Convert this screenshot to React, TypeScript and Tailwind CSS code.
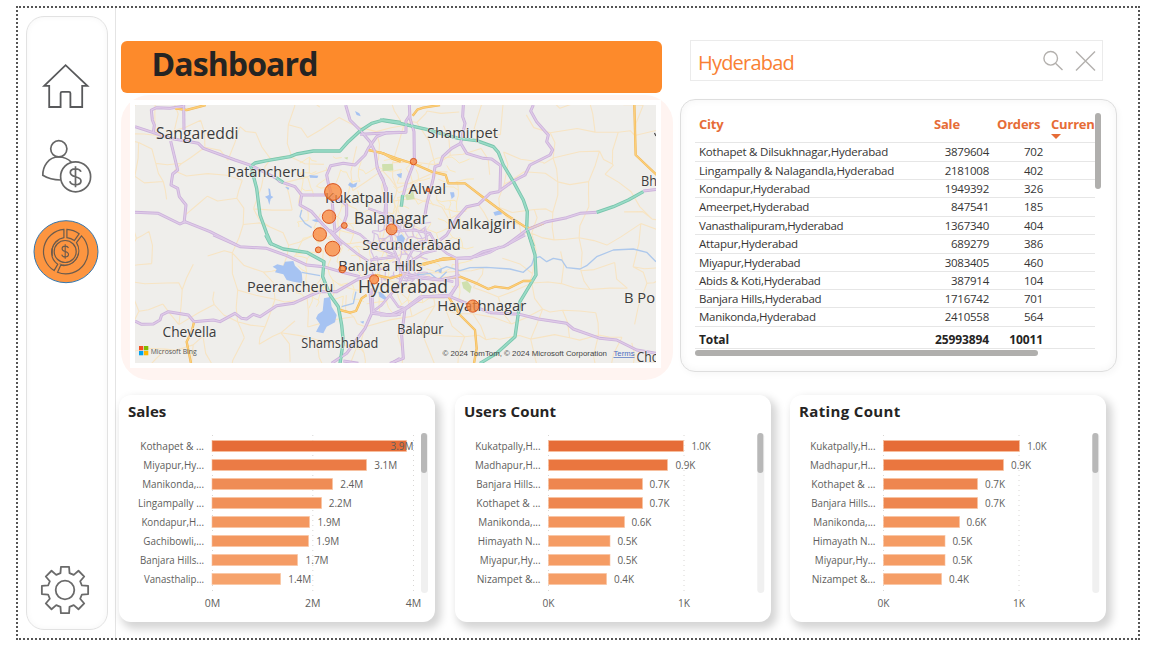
import React from "react";

type Kind = "purple" | "teal" | "orange";
type Tile = "nw" | "ne" | "sw" | "se" | "c";

const ORIGIN: Record<Tile, [number, number]> = {
  nw: [120, 95],
  ne: [380, 95],
  sw: [120, 235],
  se: [380, 235],
  c: [290, 165],
};

const place = (t: Tile) => `translate(${ORIGIN[t][0]} ${ORIGIN[t][1]}) scale(0.33333)`;

const ROADS: [Tile, Kind, string][] = [
  ["nw", "orange", "M165,40 L200,45 L257,30"],
  ["nw", "orange", "M745,165 L790,175 L815,190 L842,200"],
  ["ne", "orange", "M98,62 L112,44 L130,38 L180,30"],
  ["ne", "orange", "M0,172 L50,190 L103,207 L155,230 L197,240 L205,265 L255,265 L300,300 L340,330 L380,360 L435,395 L450,400 L490,385"],
  ["ne", "orange", "M763,30 L767,180 L830,240"],
  ["sw", "orange", "M222,262 L215,290 L200,320 L213,385"],
  ["sw", "orange", "M660,225 L690,233 L708,228 L725,190 L740,180"],
  ["se", "orange", "M130,90 L190,70 L230,70"],
  ["se", "orange", "M200,130 L240,125 L290,145 L325,162 L345,155 L385,160 L430,138 L460,138"],
  ["se", "orange", "M205,185 L240,240 L285,285 L290,340 L282,385"],
  ["c", "orange", "M255,330 L300,340 L350,325"],
  ["c", "orange", "M385,300 L450,285 L500,280"],
  ["nw", "purple", "M45,95 L100,113 L103,90 L97,75 L94,45 L110,38 L150,40 L190,34"],
  ["nw", "purple", "M191,30 L192,105"],
  ["nw", "purple", "M100,113 L150,130 L235,145 L250,160 L345,195 L395,212 L470,250 L480,260 L525,275 L545,300 L540,330 L575,350 L610,390 L640,420 L665,450"],
  ["nw", "purple", "M152,138 L173,225 L158,237 L153,270 L173,280 L178,305 L198,330 L192,385"],
  ["nw", "purple", "M45,352 L115,355 L180,387 L195,380 L270,410 L350,450"],
  ["nw", "purple", "M677,30 L690,75 L720,105 L750,140 L765,170 L772,220 L790,255 L800,300 L795,350 L805,400"],
  ["nw", "purple", "M840,112 L800,113 L770,125 L745,160 L735,180 L705,210 L670,205 L632,212 L620,240 L625,265 L635,300 L640,360 L645,410"],
  ["nw", "purple", "M545,300 L640,300 L680,330 L680,360 L670,390 L640,415"],
  ["ne", "purple", "M88,30 L90,70 L102,110 L103,200 L80,260 L70,300"],
  ["ne", "purple", "M-60,118 L0,115 L78,112 L78,78 L90,60"],
  ["ne", "purple", "M250,30 L248,65 L255,85 L242,145 L260,175 L310,190 L335,192 L362,212 L360,285"],
  ["ne", "purple", "M242,145 L215,160 L188,185 L180,210 L165,215 L160,250 L140,330 L135,360"],
  ["ne", "purple", "M460,30 L452,48 L470,80 L505,120 L500,140 L518,165 L510,180 L450,210 L435,240 L400,258 L355,290 L330,295 L295,328 L260,335 L230,370 L200,420 L180,435"],
  ["ne", "purple", "M380,450 L440,405 L500,380 L560,368 L600,355 L650,352"],
  ["ne", "purple", "M790,288 L830,283"],
  ["sw", "purple", "M280,0 L360,35 L440,40 L500,62 L560,90 L610,95 L680,115 L720,125"],
  ["sw", "purple", "M45,258 L65,268 L100,267 L120,255 L125,240 L145,230 L205,240 L222,260 L280,255 L300,260 L345,235 L365,250 L380,252 L400,238 L420,245 L470,212 L520,205 L570,182 L600,170 L650,170 L710,135 L760,120"],
  ["sw", "purple", "M635,385 L680,355 L720,300 L735,280 L755,235 L750,170"],
  ["sw", "purple", "M755,235 L800,240 L842,238"],
  ["sw", "purple", "M670,378 L715,385"],
  ["sw", "purple", "M815,385 L840,370"],
  ["se", "purple", "M435,0 L370,35 L310,50 L270,70 L230,70 L232,150 L210,185"],
  ["se", "purple", "M330,233 L420,238 L475,252 L560,265 L580,282 L660,310 L710,315 L770,345 L828,355"],
  ["se", "purple", "M0,240 L50,240 L80,220 L130,185 L210,185 L260,205 L330,233"],
  ["se", "purple", "M75,222 L65,300 L70,370 L30,385"],
  ["se", "purple", "M70,115 L130,130 L180,135 L240,122"],
  ["c", "purple", "M260,0 L270,30 L290,70 L290,150 L300,200 L310,250"],
  ["c", "purple", "M120,195 L150,225 L200,265 L235,288"],
  ["c", "purple", "M165,190 L210,208 L235,230 L270,250 L310,268"],
  ["c", "purple", "M235,130 L290,150 L330,190"],
  ["c", "purple", "M305,200 L370,195 L420,205 L440,240 L470,265 L500,280"],
  ["c", "purple", "M500,280 L500,360 L480,390"],
  ["c", "purple", "M405,190 L410,225 L370,250 L350,290"],
  ["c", "purple", "M630,245 L600,262 L560,275 L500,280"],
  ["c", "purple", "M240,285 L320,275 L340,330 L320,370 L300,390 L275,420 L248,440"],
  ["c", "purple", "M310,250 L330,300 L345,340 L400,335 L490,350"],
  ["c", "purple", "M245,370 L250,440 L300,450 L345,430"],
  ["c", "purple", "M345,430 L390,395 L480,390"],
  ["c", "purple", "M300,390 L325,425 L345,430"],
  ["c", "purple", "M350,330 L360,290 L400,265 L440,255"],
  ["nw", "teal", "M395,212 L405,204 L440,197 L510,185 L530,177 L580,168 L660,168 L685,140 L720,108 L755,85 L790,75 L842,82"],
  ["nw", "teal", "M392,212 L410,280 L420,360 L440,415 L455,450"],
  ["nw", "teal", "M468,248 L490,263"],
  ["ne", "teal", "M0,75 L60,85 L140,103 L235,130 L290,137 L340,155 L355,172 L370,210 L400,260 L430,315 L442,350 L440,400 L460,455"],
  ["ne", "teal", "M650,352 L700,335 L745,315 L790,290"],
  ["ne", "teal", "M68,300 L64,335"],
  ["sw", "teal", "M437,0 L450,25 L490,42 L560,52 L612,80 L608,125 L630,180 L655,215 L665,270 L670,320 L660,385"],
  ["se", "teal", "M447,0 L465,60 L468,120 L420,200 L405,305 L350,355 L300,385"],
];

const WATER: [Tile, string][] = [
  ["sw", "M458,95 L472,88 L490,92 L495,80 L520,78 L525,92 L545,112 L548,145 L520,140 L500,135 L490,118 L465,112 L470,103Z"],
  ["sw", "M612,190 L630,186 L635,215 L650,240 L645,262 L620,275 L610,295 L588,290 L600,268 L588,250 L594,238 L608,228Z"],
  ["sw", "M775,170 L785,172 L800,188 L795,195 L778,185Z"],
  ["c", "M320,215 L335,208 L345,220 L340,235 L322,228Z"],
  ["ne", "M340,352 L362,345 L366,358 L345,362Z"],
  ["ne", "M210,292 L222,292 L224,304 L215,312Z"],
  ["ne", "M50,238 L66,234 L64,250 L56,246Z"],
  ["nw", "M435,305 L447,300 L445,280 L450,282 L453,302 L460,306 L452,312 L448,330 L443,312Z"],
  ["nw", "M690,262 L700,268 L712,262 L708,275 L695,278 L684,270Z"],
  ["nw", "M568,240 L595,242 L592,249 L570,248Z"],
  ["nw", "M705,48 L718,55 L722,64 L710,60Z"],
  ["nw", "M575,375 L590,372 L598,382 L585,380Z"],
  ["nw", "M495,275 L508,278 L505,285Z"],
  ["se", "M175,105 L186,100 L184,115 L176,112Z"],
  ["sw", "M720,260 L732,258 L730,266Z"],
];

const STREAMS: [Tile, string][] = [
  ["se", "M165,110 L200,95 L240,107 L270,98 L320,97 L390,102 L430,112 L455,90 L462,70 L480,65 L500,80 L520,70 L545,75 L560,98 L600,102 L620,92 L650,65 L700,45 L760,42 L800,52 L828,80"],
  ["nw", "M545,345 L540,365 L555,385 L575,398"],
  ["sw", "M665,215 L700,205 L708,170"],
  ["sw", "M545,112 L600,122"],
  ["c", "M380,330 L420,325 L445,345 L470,320"],
];

const PARKS: [Tile, string][] = [
  ["nw", "M786,208 L818,206 L820,226 L788,228Z"],
  ["ne", "M8,208 L36,207 L38,226 L10,227Z"],
  ["ne", "M75,300 L100,290 L104,312 L80,316Z"],
  ["se", "M245,142 L262,138 L275,155 L270,175 L250,160Z"],
  ["nw", "M672,188 L684,186 L682,194Z"],
];

const ROAD_COLORS: Record<Kind, [string, string]> = {
  purple: ["#ccb2db", "#dfcbe8"],
  teal: ["#78c5ac", "#9adbc7"],
  orange: ["#f2b653", "#fbcf7b"],
};

const noise = (i: number, j: number, k: number) => {
  const v = Math.sin(i * 127.1 + j * 311.7 + k * 74.7) * 43758.5453;
  return v - Math.floor(v);
};

function lattice(x0: number, y0: number, cols: number, rows: number, step: number, density: number) {
  const node = (i: number, j: number) => [
    x0 + i * step + (noise(i, j, 1) - 0.5) * step * 0.9,
    y0 + j * step + (noise(i, j, 2) - 0.5) * step * 0.9,
  ];
  let d = "";
  const link = (a: number[], b: number[], s: number) => {
    const mx = (a[0] + b[0]) / 2 + (s - 0.5) * step * 0.35;
    const my = (a[1] + b[1]) / 2 + (0.5 - s) * step * 0.3;
    d += `M${a[0].toFixed(1)},${a[1].toFixed(1)}L${mx.toFixed(1)},${my.toFixed(1)}L${b[0].toFixed(1)},${b[1].toFixed(1)}`;
  };
  for (let i = 0; i < cols; i++) {
    for (let j = 0; j < rows; j++) {
      if (noise(i, j, 3) < density) link(node(i, j), node(i + 1, j), noise(i, j, 5));
      if (noise(i, j, 4) < density) link(node(i, j), node(i, j + 1), noise(i, j, 6));
    }
  }
  return d;
}

const MINOR = lattice(130, 100, 20, 10, 27, 0.62);
const CITY = lattice(300, 160, 17, 15, 10, 0.5);
const CORE = lattice(372, 222, 8, 9, 7, 0.75);

const LABELS: [string, number, number, number, number][] = [
  ["Sangareddi", 156, 139, 82.5, 16],
  ["Patancheru", 227.3, 176.5, 78, 15],
  ["Shamirpet", 427, 138, 71, 15],
  ["Kukatpalli", 325, 202.5, 68.5, 15],
  ["Alwal", 408.5, 194, 37.5, 15],
  ["Balanagar", 354, 223.8, 74, 16],
  ["Malkajgiri", 447.3, 229, 68.5, 15],
  ["Secunderābād", 362.3, 250, 98.5, 15],
  ["Banjara Hills", 338.3, 271, 84.5, 15],
  ["Hyderabad", 358, 293, 90, 18],
  ["Peerancheru", 247, 292, 86.5, 15],
  ["Hayathnagar", 437.3, 311.3, 89, 15],
  ["Chevella", 162.5, 337, 54, 15],
  ["Shamshabad", 301.3, 348.3, 77, 14],
  ["Balapur", 397.3, 334, 46, 14],
  ["B Po", 624, 303, 31, 14.5],
  ["Bh", 641, 186, 16, 14],
  ["Cho", 636.5, 362, 22.5, 14.5],
];

const DOTS: [number, number, number][] = [
  [333, 192, 8.5], [329, 216.7, 6.8], [344.3, 225.5, 3], [319.8, 234.4, 6.8],
  [332.5, 248.7, 7.5], [318.3, 249.8, 3], [391.6, 229.4, 5.5], [413.5, 161.6, 3.3],
  [428.3, 190, 1.7], [342.3, 269.3, 3.5], [374.1, 279.4, 4.6], [472.8, 306.1, 6.2],
];

function CityMap() {
  return (
    <svg className="block h-[258px] w-[521px]" viewBox="135 105 521 258" fontFamily="'Open Sans','Noto Sans',sans-serif">
      <rect x="135" y="105" width="521" height="258" fill="#efeeeb" />
      <g fill="none" strokeLinejoin="round">
        <path d={MINOR} stroke="#f7e4c3" strokeWidth="1.1" />
        <path d={CITY} stroke="#fae8bd" strokeWidth="1" />
        <path d={CORE} stroke="#d6c1e2" strokeWidth="1.2" />
      </g>
      {PARKS.map(([t, d], i) => <path key={i} d={d} transform={place(t)} fill="#cfe0ae" />)}
      {WATER.map(([t, d], i) => <path key={i} d={d} transform={place(t)} fill="#a6c3f2" />)}
      <g fill="none" stroke="#adc8ec" strokeWidth="4" strokeLinejoin="round">
        {STREAMS.map(([t, d], i) => <path key={i} d={d} transform={place(t)} />)}
      </g>
      <g fill="none" strokeLinejoin="round" strokeLinecap="butt">
        {ROADS.map(([t, k, d], i) => (
          <path key={i} d={d} transform={place(t)} stroke={ROAD_COLORS[k][0]} strokeWidth={k === "teal" ? 10 : t === "c" ? 7.5 : k === "orange" ? 7 : 9} />
        ))}
        {ROADS.map(([t, k, d], i) => (
          <path key={i} d={d} transform={place(t)} stroke={ROAD_COLORS[k][1]} strokeWidth={k === "teal" ? 5 : 4} />
        ))}
      </g>
      <g fill="#3c3c3c" fontWeight="500" stroke="#f4f3f0" strokeWidth="1.6" strokeOpacity="0.65" paintOrder="stroke" strokeLinejoin="round">
        {LABELS.map(([s, x, y, w, size]) => (
          <text key={s} x={x} y={y} fontSize={size} textLength={w} lengthAdjust="spacingAndGlyphs">{s}</text>
        ))}
      </g>
      <path d="M654.5 133 l1.5 3" stroke="#444" strokeWidth="1.2" />
      <g fill="#fb8537" fillOpacity="0.75" stroke="#d9541e" strokeWidth="1">
        {DOTS.map(([x, y, r], i) => <circle key={i} cx={x} cy={y} r={r - 0.1} />)}
      </g>
      <path d="M139 346h4.3v4.3h-4.3z" fill="#f25022" />
      <path d="M144 346h4.3v4.3h-4.3z" fill="#7fba00" />
      <path d="M139 351h4.3v4.3h-4.3z" fill="#00a4ef" />
      <path d="M144 351h4.3v4.3h-4.3z" fill="#ffb900" />
      <text x="150.7" y="354" fontSize="7.4" fill="#555" textLength="46" lengthAdjust="spacingAndGlyphs">Microsoft Bing</text>
      <g fontFamily="'Liberation Sans',sans-serif" fontSize="7.4">
        <text x="442.5" y="356" fill="#444" textLength="164.5" lengthAdjust="spacingAndGlyphs">© 2024 TomTom, © 2024 Microsoft Corporation</text>
        <text x="613.5" y="356" fill="#4a6cc0" textLength="21" lengthAdjust="spacingAndGlyphs">Terms</text>
        <path d="M613.5 357.5h21" stroke="#4a6cc0" strokeWidth="0.7" />
      </g>
    </svg>
  );
}

type Bar = { name: string; left: number; end: number; value: string; at: number; width: number; color: string };
const bar = (name: string, left: number, end: number, value: string, at: number, width: number, color: string): Bar => ({ name, left, end, value, at, width, color });

const SALES: Bar[] = [
  bar("Kothapet & ...", 21.2, 288, "3.9M", 271.5, 23, "#e66c37"),
  bar("Miyapur,Hy...", 24.3, 248, "3.1M", 255.3, 23, "#eb7b45"),
  bar("Manikonda,...", 23.2, 214, "2.4M", 221.3, 23, "#ef8c55"),
  bar("Lingampally ...", 19, 203, "2.2M", 209.8, 23, "#f19159"),
  bar("Kondapur,H...", 22.4, 191, "1.9M", 198.6, 23, "#f3975f"),
  bar("Gachibowli,...", 24.3, 190, "1.9M", 197.3, 23, "#f3975f"),
  bar("Banjara Hills...", 21, 179, "1.7M", 186.6, 23, "#f59c65"),
  bar("Vanasthalip...", 25, 162, "1.4M", 169.3, 23, "#f6a36c"),
];
const USERS: Bar[] = [
  bar("Kukatpally,H...", 20.2, 229, "1.0K", 236.4, 19.3, "#e66c37"),
  bar("Madhapur,H...", 20, 213, "0.9K", 220.4, 20, "#ea763f"),
  bar("Banjara Hills...", 21.2, 188, "0.7K", 194.5, 20, "#ee864f"),
  bar("Kothapet & ...", 21.2, 188, "0.7K", 194.5, 20, "#ee864f"),
  bar("Manikonda,...", 23.3, 170, "0.6K", 176.4, 20, "#f3945c"),
  bar("Himayath N...", 22.7, 155.5, "0.5K", 162.4, 20, "#f59c64"),
  bar("Miyapur,Hy...", 24.8, 155.5, "0.5K", 162.4, 20, "#f59c64"),
  bar("Nizampet &...", 21.7, 152, "0.4K", 159, 20, "#f59e67"),
];
const RATINGS: Bar[] = [
  { ...USERS[0], end: 230, at: 237.2 },
  { ...USERS[1], end: 214, at: 221.1 },
  { ...USERS[3], at: 195 },
  { ...USERS[2], at: 195 },
  ...USERS.slice(4),
];

type ChartProps = {
  title: string;
  titleClass: string;
  bars: Bar[];
  ticks: [string, number, number][];
  start: number;
  labelEnd: number;
  scroll: number;
};

function BarChart({ title, titleClass, bars, ticks, start, labelEnd, scroll }: ChartProps) {
  return (
    <>
      <h2 className={`h-8 pl-[9px] text-[15px] leading-8 font-bold whitespace-nowrap text-[#252423] ${titleClass}`}>{title}</h2>
      <svg className="block h-[195px] w-[316px]" viewBox="0 32 316 195" fontFamily="'Open Sans','Noto Sans',sans-serif" fontSize="11" fill="#605e5c">
        {ticks.map(([t, x, w]) => (
          <g key={t}>
            <path d={`M${x} 40V199`} stroke="#d8d6d4" strokeWidth="1" strokeDasharray="1 4" />
            <text x={x - w / 2} y="212" fontSize="10.5" textLength={w} lengthAdjust="spacingAndGlyphs">{t}</text>
          </g>
        ))}
        {bars.map((b, i) => (
          <g key={b.name}>
            <rect x={start + 0.5} y={45.5 + i * 19} width={b.end - start - 1} height="11" fill={b.color} stroke="#f9c3a0" strokeOpacity="0.6" strokeWidth="1" />
            <text x={b.left} y={55 + i * 19} textLength={labelEnd - b.left} lengthAdjust="spacingAndGlyphs">{b.name}</text>
            <text x={b.at} y={55 + i * 19} fontSize="10.5" textLength={b.width} lengthAdjust="spacingAndGlyphs">{b.value}</text>
          </g>
        ))}
        <rect x={scroll} y="38" width="7" height="160" rx="3.5" fill="#f0f0f0" />
        <rect x={scroll} y="38" width="6" height="40" rx="3" fill="#b8b8b8" />
      </svg>
    </>
  );
}

const ROWS: [string, string, string, string, string][] = [
  ["Kothapet & Dilsukhnagar,Hyderabad", "3879604", "702", "h-[19px]", "tracking-[-0.22px]"],
  ["Lingampally & Nalagandla,Hyderabad", "2181008", "402", "h-[18px]", "tracking-[-0.18px]"],
  ["Kondapur,Hyderabad", "1949392", "326", "h-[18px]", "tracking-[-0.26px]"],
  ["Ameerpet,Hyderabad", "847541", "185", "h-[19px]", "tracking-[-0.3px]"],
  ["Vanasthalipuram,Hyderabad", "1367340", "404", "h-[18px]", "tracking-[-0.38px]"],
  ["Attapur,Hyderabad", "689279", "386", "h-[19px]", "tracking-[-0.24px]"],
  ["Miyapur,Hyderabad", "3083405", "460", "h-[18px]", "tracking-[-0.3px]"],
  ["Abids & Koti,Hyderabad", "387914", "104", "h-[18px]", "tracking-[-0.26px]"],
  ["Banjara Hills,Hyderabad", "1716742", "701", "h-[18px]", "tracking-[-0.3px]"],
  ["Manikonda,Hyderabad", "2410558", "564", "h-[19px]", "tracking-[-0.3px]"],
];

function CityTable() {
  return (
    <div className="flex h-[244px] w-[407px]">
      <div className="w-[400px] overflow-hidden whitespace-nowrap">
        <div className="flex h-[30px] border-b border-[#e6e6e6] text-[13px] leading-[23px] font-bold tracking-[-0.2px] text-[#e66c37]">
          <span className="w-[239px] pl-1">City</span>
          <span className="w-[63px]">Sale</span>
          <span className="w-[54px]">Orders</span>
          <span className="relative w-[44px]">
            Curren
            <svg className="absolute top-[21px] left-0 h-[5px] w-[10px]" viewBox="0 0 10 5"><path d="M0 0h10L5 5z" fill="#e66c37" /></svg>
          </span>
        </div>
        {ROWS.map(([city, sale, orders, h, tracking]) => (
          <div key={city} className={`flex items-center border-b border-[#e6e6e6] text-[11.5px] text-[#363534] ${h}`}>
            <span className={`w-[224px] pl-1 ${tracking}`}>{city}</span>
            <span className="w-[70px] text-right tracking-[-0.25px]">{sale}</span>
            <span className="w-[54px] text-right tracking-[-0.25px]">{orders}</span>
          </div>
        ))}
        <div className="flex h-[22px] items-center border-b border-[#e6e6e6] pt-1 text-[12px] font-bold tracking-[-0.1px] text-[#252423]">
          <span className="w-[224px] pl-1">Total</span>
          <span className="w-[70px] text-right">25993894</span>
          <span className="w-[54px] text-right">10011</span>
        </div>
        <div className="mt-px h-[6px] w-[343px] rounded-full bg-[#b0afad]" />
      </div>
      <div className="h-[76px] w-[6px] rounded-full bg-[#b0afad]" />
    </div>
  );
}

const GEAR = Array.from({ length: 8 }, (_, k) =>
  ([[-15, 17.5], [-10, 23.5], [10, 23.5], [15, 17.5]] as const)
    .map(([a, r]) => {
      const t = ((k * 45 + a - 90) * Math.PI) / 180;
      return `${(25 + r * Math.cos(t)).toFixed(2)},${(25 + r * Math.sin(t)).toFixed(2)}`;
    })
    .join(" ")
).join(" ");

function Dollar() {
  return <path d="M5.5 -5 C4.5 -7.5 2.5 -8 0 -8 C-3.2 -8 -5.2 -6.5 -5.2 -4.2 C-5.2 -1.8 -3 -0.8 0 0 C3.2 0.8 5.5 1.8 5.5 4.2 C5.5 6.6 3.2 8 0 8 C-3 8 -5 7 -5.7 4.5 M0 -10.5V10.5" />;
}

function Sidebar() {
  return (
    <aside className="h-[630px] w-[98px] border-r border-[#e4e4e4] pt-2 pl-2">
      <nav className="flex h-[614px] w-[82px] flex-col items-center rounded-[18px] border border-[#e2e2e2] bg-white pr-1 shadow-[inset_0_0_6px_rgba(0,0,0,0.04)]">
        <svg className="mt-[46px] h-[46px] w-[50px] shrink-0" viewBox="40 63 50 46" fill="none" stroke="#58595b" strokeWidth="1.8">
          <path d="M49.2 85.8H44.2L65.6 65.2L87.4 85.8H82.2V107H70.4V93.2Q70.4 91.8 69 91.8H62Q60.6 91.8 60.6 93.2V107H49.2Z" />
        </svg>
        <svg className="mt-[29px] h-[56px] w-[54px] shrink-0" viewBox="38 138 54 56" fill="none" stroke="#666" strokeWidth="1.7">
          <circle cx="58.8" cy="148.8" r="8.1" />
          <path d="M71.5 162.3C68 158.5 63.5 157 58.5 157C48.5 157 42.7 166 42.8 175.3C48 178.6 54 180 60.5 180" />
          <circle cx="75.6" cy="176.8" r="15" />
          <g transform="translate(75.5 176.8)"><Dollar /></g>
        </svg>
        <svg className="mt-[25px] ml-px h-[66px] w-[68px] shrink-0" viewBox="31.5 219 68 66" fill="none" stroke="#6b5b4d" strokeWidth="1.2">
          <ellipse cx="65.5" cy="251.7" rx="32" ry="31" fill="#fd9540" stroke="#3576ac" strokeWidth="1" />
          <path d="M63.4 229.4A22.3 22.3 0 0 0 53.6 270.6L57.2 264.3A15 15 0 0 1 63.4 237.6Z" />
          <path d="M66.4 229.4A22.3 22.3 0 0 1 78.6 233.8L73.8 240.6A15 15 0 0 0 66.4 237.6Z" />
          <path d="M81 235.8A22.3 22.3 0 0 1 57 272.3L60.2 265.2A15 15 0 0 0 76 242.6Z" />
          <circle cx="64.7" cy="251.5" r="11" />
          <path d="M51 253A14 14 0 0 1 58 240.5M59 263.8A13.5 13.5 0 0 0 78 253M52 247V256" strokeWidth="0.8" />
          <g transform="translate(64.7 251.5) scale(.6 .68)" strokeWidth="1.8"><Dollar /></g>
        </svg>
        <svg className="mt-[280px] h-[50px] w-[50px] shrink-0" viewBox="0 0 50 50" fill="none" stroke="#6a6a6a" strokeWidth="1.8" strokeLinejoin="round">
          <polygon points={GEAR} />
          <circle cx="25" cy="25" r="9.3" />
        </svg>
      </nav>
    </aside>
  );
}

const CARD = "h-[227px] w-[316px] shrink-0 rounded-xl bg-white shadow-[4px_5px_9px_2px_rgba(0,0,0,0.17)]";

export default function App() {
  return (
    <div className="h-[649px] w-[1149px] overflow-hidden bg-white pt-[6px] pl-4 font-['Open_Sans','Noto_Sans',sans-serif]">
      <div className="flex h-[634px] w-[1124px] border-2 border-dotted border-[#555]">
        <Sidebar />
        <main className="flex-1">
          <div className="flex h-[372px]">
            <section className="ml-[5px] w-[552px] pt-[33px]">
              <h1 className="h-[52px] w-[541px] rounded-md bg-[#fd8a2b] pl-[30.5px] text-[32px] leading-[46px] font-bold tracking-[-0.9px] text-[#252423]">Dashboard</h1>
              <div className="mt-[2px] h-[285px] rounded-[28px] bg-[#fff4f1] pt-[5px] pl-[9px]">
                <div className="h-[268px] w-[531px] bg-white p-[5px] pl-[5px]">
                  <CityMap />
                </div>
              </div>
            </section>
            <section className="ml-[7px] w-[437px] pt-8">
              <div className="ml-[10px] flex h-[41px] w-[413px] items-center border border-[#ebebeb] pl-[7px]">
                <span className="flex-1 pt-1 text-[20px] tracking-[-0.8px] text-[#f98033]">Hyderabad</span>
                <svg className="mr-[6px] h-[24px] w-[54px]" viewBox="0 0 54 24" fill="none" stroke="#b3b0ad" strokeWidth="1.4">
                  <circle cx="8.7" cy="9.3" r="6.8" />
                  <path d="M13.5 14.3L20.5 21M34 2.5L53 21.5M53 2.5L34 21.5" />
                </svg>
              </div>
              <div className="mt-[18px] h-[273px] rounded-[15px] border border-[#dedede] bg-white pt-[13px] pl-[14px] shadow-[2px_3px_6px_rgba(0,0,0,0.03),inset_0_0_8px_rgba(0,0,0,0.05)]">
                <CityTable />
              </div>
            </section>
          </div>
          <div className="mt-[15px] flex gap-5 pl-[3px]">
            <section className={CARD}>
              <BarChart title="Sales" titleClass="tracking-[0px]" bars={SALES} start={92.5} labelEnd={85} scroll={302} ticks={[["0M", 93.5, 15.5], ["2M", 193.8, 15.5], ["4M", 294.5, 15.5]]} />
            </section>
            <section className={CARD}>
              <BarChart title="Users Count" titleClass="tracking-[0.12px]" bars={USERS} start={93} labelEnd={85.5} scroll={302.3} ticks={[["0K", 93.5, 12], ["1K", 229, 12]]} />
            </section>
            <section className={`${CARD} -ml-px`}>
              <BarChart title="Rating Count" titleClass="tracking-[0.36px]" bars={RATINGS} start={93} labelEnd={85.5} scroll={302.3} ticks={[["0K", 93.5, 12], ["1K", 229, 12]]} />
            </section>
          </div>
        </main>
      </div>
    </div>
  );
}
